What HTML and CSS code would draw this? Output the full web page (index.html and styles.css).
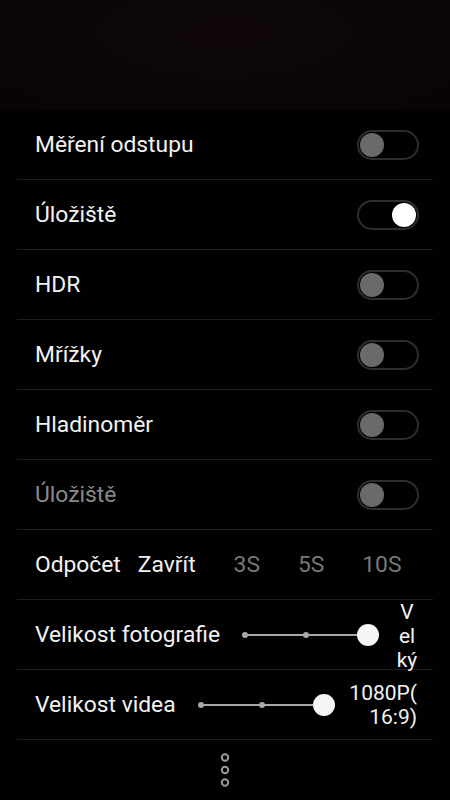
FILE: index.html
```html
<!DOCTYPE html>
<html lang="cs">
<head>
<meta charset="utf-8">
<link rel="stylesheet" href="styles.css">
</head>
<body>
<div class="screen">
  <div class="preview"></div>
  <div class="panel">
    <div class="row">
      <span class="label">Měření odstupu</span>
      <span class="toggle"><span class="knob"></span></span>
    </div>
    <div class="row">
      <span class="label">Úložiště</span>
      <span class="toggle on"><span class="knob"></span></span>
    </div>
    <div class="row">
      <span class="label">HDR</span>
      <span class="toggle"><span class="knob"></span></span>
    </div>
    <div class="row">
      <span class="label">Mřížky</span>
      <span class="toggle"><span class="knob"></span></span>
    </div>
    <div class="row">
      <span class="label">Hladinoměr</span>
      <span class="toggle"><span class="knob"></span></span>
    </div>
    <div class="row disabled">
      <span class="label">Úložiště</span>
      <span class="toggle"><span class="knob"></span></span>
    </div>
    <div class="row timer">
      <span class="label">Odpočet</span>
      <span class="opt active">Zavřít</span>
      <span class="opt">3S</span>
      <span class="opt">5S</span>
      <span class="opt">10S</span>
    </div>
    <div class="row slider-row">
      <span class="label">Velikost fotografie</span>
      <span class="slider">
        <span class="track"></span>
        <span class="tick"></span>
        <span class="tick"></span>
        <span class="thumb"></span>
      </span>
      <span class="value narrow">Velký</span>
    </div>
    <div class="row slider-row">
      <span class="label">Velikost videa</span>
      <span class="slider">
        <span class="track"></span>
        <span class="tick"></span>
        <span class="tick"></span>
        <span class="thumb"></span>
      </span>
      <span class="value wide">1080P(16:9)</span>
    </div>
    <div class="more">
      <svg width="12" height="40" viewBox="0 0 12 40">
        <circle cx="6" cy="7.5" r="3.2" fill="none" stroke="#9a9a9a" stroke-width="2"/>
        <circle cx="6" cy="20" r="3.2" fill="none" stroke="#9a9a9a" stroke-width="2"/>
        <circle cx="6" cy="32.5" r="3.2" fill="none" stroke="#9a9a9a" stroke-width="2"/>
      </svg>
    </div>
  </div>
</div>
</body>
</html>
```
FILE: styles.css
```css
html, body {
  margin: 0;
  padding: 0;
  background: #000;
}
.screen {
  width: 450px;
  height: 800px;
  overflow: hidden;
  font-family: Roboto, "Noto Sans", sans-serif;
  color: #f2f2f2;
  display: flex;
  flex-direction: column;
}
.preview {
  height: 110px;
  flex: none;
  background: radial-gradient(ellipse at 50% 30%, #0f0707 0%, #0b0505 70%, #080404 100%);
}
.panel {
  flex: 1;
  background: #010101;
  padding: 0 17px;
  display: flex;
  flex-direction: column;
}
.row {
  height: 69px;
  border-bottom: 1px solid #1f1f1f;
  display: flex;
  align-items: center;
  padding: 0 15px 0 18px;
  font-size: 22.8px;
}
.row .label {
  flex: none;
}
.toggle {
  margin-left: auto;
  width: 56px;
  height: 26px;
  border: 2px solid #2e2e2e;
  border-radius: 15px;
  display: flex;
  align-items: center;
  padding: 0 1px;
  margin-right: -1px;
}
.toggle .knob {
  width: 24px;
  height: 24px;
  border-radius: 50%;
  background: #6a6a6a;
}
.toggle.on {
  justify-content: flex-end;
}
.toggle.on .knob {
  background: #fff;
}
.disabled .label {
  color: #8a8a8a;
}
.timer .opt {
  color: #787878;
  margin-left: 38px;
}
.timer .opt.active {
  color: #f2f2f2;
  margin-left: 17px;
}
.slider-row {
  padding-right: 16px;
}
.slider {
  position: relative;
  width: 145px;
  height: 24px;
  margin-left: 14px;
  flex: none;
}
.track {
  position: absolute;
  left: 11px;
  right: 11px;
  top: 11px;
  height: 2px;
  background: #a8a8a8;
}
.tick {
  position: absolute;
  top: 9px;
  width: 6px;
  height: 6px;
  border-radius: 50%;
  background: #a8a8a8;
  left: 8px;
}
.tick + .tick {
  left: 69px;
}
.thumb {
  position: absolute;
  right: 0;
  top: 1px;
  width: 22px;
  height: 22px;
  border-radius: 50%;
  background: #f5f5f5;
}
.value {
  margin-left: auto;
  word-break: break-all;
  line-break: anywhere;
  line-height: 24px;
  font-size: 21px;
}
.value.narrow {
  width: 22px;
  text-align: center;
  margin-right: -1px;
  padding-top: 3px;
}
.value.wide {
  width: 68px;
  text-align: right;
  margin-right: 0;
}
.more {
  flex: 1;
  display: flex;
  justify-content: center;
  padding-top: 10px;
}
```
